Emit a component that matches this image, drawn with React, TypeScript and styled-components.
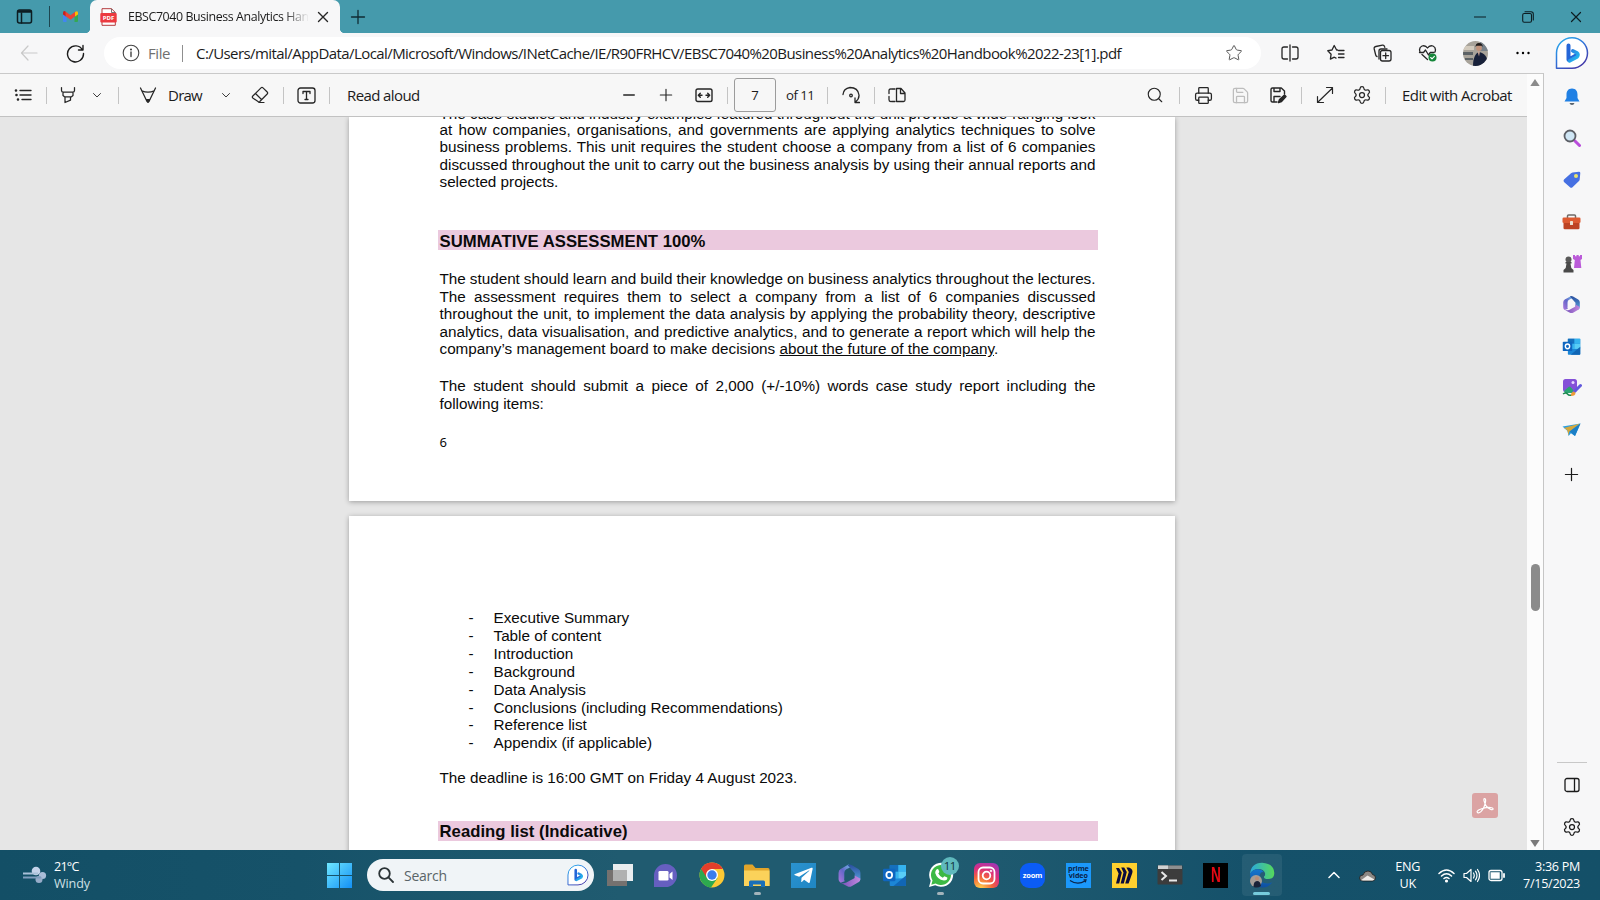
import React from 'react';
import styled, { createGlobalStyle } from 'styled-components';
import { Star, Printer, Save, Search, Settings } from 'lucide-react';
import { FaTelegramPlane } from 'react-icons/fa';

const GlobalStyle = createGlobalStyle`
  * { box-sizing: border-box; }
  body { margin: 0; font-family: 'Open Sans', 'Noto Sans', sans-serif; color: #1b1b1b; overflow: hidden; }
  svg { display: block; flex: none; }
`;

/* ---------- shell ---------- */
const Window = styled.div`
  width: 1600px;
  height: 900px;
  display: flex;
  flex-direction: column;
  overflow: hidden;
  background: #f7f7f8;
`;
const Cell = styled.div<{ $w: number; $ml?: number; $color?: string }>`
  flex: none;
  width: ${(p) => p.$w}px;
  margin-left: ${(p) => p.$ml ?? 0}px;
  color: ${(p) => p.$color ?? '#262626'};
  display: flex;
  align-items: center;
  justify-content: center;
`;
const Divider = styled.i<{ $ml?: number; $h?: number; $color?: string }>`
  flex: none;
  width: 1px;
  height: ${(p) => p.$h ?? 17}px;
  margin-left: ${(p) => p.$ml ?? 0}px;
  background: ${(p) => p.$color ?? '#c4c4c4'};
`;

/* ---------- title bar ---------- */
const TitleBar = styled.header`
  flex: none;
  height: 33px;
  display: flex;
  align-items: center;
  background: #459aac;
`;
const Tab = styled.div`
  position: relative;
  margin-left: 2px;
  width: 250px;
  height: 33px;
  padding-left: 10px;
  display: flex;
  align-items: center;
  background: #f7f7f8;
  border-radius: 7px 7px 0 0;
  &::before, &::after {
    content: '';
    position: absolute;
    bottom: 0;
    width: 5px;
    height: 5px;
  }
  &::before { left: -5px; background: radial-gradient(circle at 0 0, transparent 5px, #f7f7f8 5.5px); }
  &::after { right: -5px; background: radial-gradient(circle at 100% 0, transparent 5px, #f7f7f8 5.5px); }
`;
const TabTitle = styled.span`
  width: 180px;
  margin-left: 11px;
  white-space: nowrap;
  font-size: 12.4px;
  letter-spacing: -0.4px;
  mask-image: linear-gradient(90deg, #000 156px, transparent 181px);
`;
const WindowButtons = styled.div`
  margin-left: auto;
  display: flex;
`;

/* ---------- address bar ---------- */
const AddressBar = styled.div`
  flex: none;
  height: 40px;
  display: flex;
  align-items: center;
`;
const UrlPill = styled.div`
  flex: none;
  margin-left: 10px;
  width: 1157px;
  height: 32px;
  display: flex;
  align-items: center;
  background: #fff;
  border-radius: 16px;
  font-size: 15px;
  letter-spacing: -0.571px;
`;
const Scheme = styled.span`
  width: 26px;
  margin-left: 8px;
  color: #707070;
  letter-spacing: -0.4px;
`;
const Url = styled.span`
  margin-left: 13px;
  width: 1018px;
  white-space: nowrap;
`;
const Avatar = styled.div`
  width: 25px;
  height: 25px;
  border-radius: 50%;
  overflow: hidden;
`;

/* ---------- viewer ---------- */
const Body = styled.div`
  flex: none;
  height: 777px;
  display: flex;
`;
const Viewer = styled.div`
  width: 1544px;
  display: flex;
  border-top: 1px solid #c9c9c9;
  border-right: 1px solid #c6c6c6;
`;
const ViewerMain = styled.main`
  width: 1527px;
  display: flex;
  flex-direction: column;
`;
const Toolbar = styled.div`
  flex: none;
  height: 43px;
  display: flex;
  align-items: center;
  border-bottom: 1px solid #c2c2c2;
  background: #f7f7f7;
`;
const ToolGroup = styled.div<{ $w?: number }>`
  flex: none;
  width: ${(p) => (p.$w ? `${p.$w}px` : 'auto')};
  height: 42px;
  display: flex;
  align-items: center;
`;
const ToolLabel = styled.span<{ $w?: number; $ml?: number; $small?: boolean; $ls?: number }>`
  width: ${(p) => (p.$w ? `${p.$w}px` : 'auto')};
  margin-left: ${(p) => p.$ml ?? 0}px;
  font-size: ${(p) => (p.$small ? 13.2 : 15)}px;
  letter-spacing: ${(p) => p.$ls ?? -0.6}px;
  white-space: nowrap;
`;
const PageBox = styled.div`
  width: 42px;
  height: 34px;
  margin-left: 6px;
  border: 1px solid #9c9c9c;
  border-radius: 3px;
  font-size: 13.2px;
  display: flex;
  align-items: center;
  justify-content: center;
`;
const ScrollTrack = styled.div`
  width: 16px;
  height: 776px;
  padding: 5px 0 3px;
  display: flex;
  flex-direction: column;
  align-items: center;
  background: #fcfcfc;
`;
const ScrollThumb = styled.div`
  width: 9px;
  height: 47px;
  margin: 478px 0 auto;
  border-radius: 5px;
  background: #8b8b8b;
`;

/* ---------- document ---------- */
const Canvas = styled.div`
  position: relative;
  height: 733px;
  padding-left: 349px;
  overflow: hidden;
  background: #e6e6e6;
`;
const Page = styled.article<{ $h: number; $top: number }>`
  display: flow-root;
  width: 826px;
  height: ${(p) => p.$h}px;
  margin-bottom: 15px;
  padding: ${(p) => p.$top}px 0 0 90.5px;
  background: #fff;
  box-shadow: 0 1px 5px rgba(0, 0, 0, 0.32);
  font-family: 'Liberation Sans', Arial, sans-serif;
  font-size: 15.28px;
  line-height: 17.57px;
  color: #0a0a0a;
`;
const Paragraph = styled.div<{ $mt?: number }>`
  margin-top: ${(p) => p.$mt ?? 0}px;
`;
const Line = styled.p<{ $natural?: boolean }>`
  width: 656px;
  margin: 0;
  white-space: ${(p) => (p.$natural ? 'nowrap' : 'normal')};
  word-spacing: ${(p) => (p.$natural ? 0 : -0.5)}px;
  text-align-last: ${(p) => (p.$natural ? 'left' : 'justify')};
`;
const CutLine = styled(Line)`
  margin-bottom: -1.5px;
`;
const Band = styled.h2<{ $mt: number; $lh?: number }>`
  width: 660.5px;
  height: 20px;
  margin: ${(p) => p.$mt}px 0 0 -2px;
  padding-left: 2px;
  background: #ebc9de;
  font-size: 16.7px;
  letter-spacing: 0.03px;
  line-height: ${(p) => p.$lh ?? 22}px;
`;
const PageNumber = styled.div`
  margin-top: 21px;
  font: 13px/18px 'Noto Sans', sans-serif;
`;
const Items = styled.ul`
  list-style: none;
  margin: 0;
  padding: 0;
  line-height: 17.85px;
`;
const Item = styled.li`
  display: flex;
  padding-left: 29px;
  &::before { content: '-'; width: 25px; }
`;
const AcrobatButton = styled.div`
  position: absolute;
  left: 1472px;
  top: 676px;
  width: 26px;
  height: 25px;
  display: flex;
  align-items: center;
  justify-content: center;
  border-radius: 3px;
  background: #dba3a3;
`;

/* ---------- sidebar ---------- */
const Sidebar = styled.aside`
  width: 55px;
  height: 777px;
  padding: 3px 0 3px;
  display: flex;
  flex-direction: column;
  align-items: center;
`;
const SideItem = styled.div<{ $h?: number }>`
  flex: none;
  height: ${(p) => p.$h ?? 41.6}px;
  display: flex;
  align-items: center;
`;
const SideRule = styled.hr`
  width: 30px;
  height: 1px;
  margin: auto 0 1px;
  border: 0;
  background: #c8c8c8;
`;

/* ---------- taskbar ---------- */
const Taskbar = styled.footer`
  flex: none;
  height: 50px;
  display: flex;
  align-items: center;
  background: linear-gradient(90deg, #134f66 0, #165269 300px, #205b70 620px, #205b70 940px, #15516a 1250px, #145068 100%);
  color: #fff;
  font-size: 12.6px;
  line-height: 17px;
`;
const Weather = styled.div`
  flex: none;
  width: 273px;
  margin-left: 6px;
  span:last-child { color: #cfe0e6; letter-spacing: -0.1px; }
`;
const Stack = styled.div<{ $align?: string; $ls?: number }>`
  display: flex;
  flex-direction: column;
  text-align: ${(p) => p.$align ?? 'left'};
  letter-spacing: ${(p) => p.$ls ?? -0.35}px;
`;
const SearchBox = styled.div`
  flex: none;
  width: 227px;
  height: 32px;
  margin: 0 3px 0 15px;
  padding: 0 5px 0 11px;
  display: flex;
  align-items: center;
  border-radius: 16px;
  background: #f0f4f7;
  color: #5a6468;
  font-size: 14px;
  letter-spacing: -0.24px;
`;
const SearchLabel = styled.span`
  margin: 0 auto 0 10px;
`;
const TaskButton = styled.div<{ $active?: boolean }>`
  flex: none;
  position: relative;
  width: 40px;
  height: 42px;
  margin: 0 2.93px;
  display: flex;
  align-items: center;
  justify-content: center;
  border-radius: 4px;
  background: ${(p) => (p.$active ? 'rgba(255,255,255,0.07)' : 'none')};
`;
const Running = styled.i<{ $active?: boolean }>`
  position: absolute;
  bottom: 1px;
  width: ${(p) => (p.$active ? 17 : 7)}px;
  height: 3px;
  border-radius: 2px;
  background: ${(p) => (p.$active ? '#76cbdc' : '#a3b4bb')};
`;
const Badge = styled.span`
  position: absolute;
  left: 20px;
  top: 3px;
  width: 18px;
  height: 18px;
  border-radius: 50%;
  background: #5fb9bd;
  color: #10303a;
  font-size: 11.5px;
  line-height: 17px;
  text-align: center;
  letter-spacing: -0.6px;
`;
const Tile = styled.div<{ $bg: string; $round?: number }>`
  width: 25px;
  height: 25px;
  display: flex;
  flex-direction: column;
  align-items: center;
  justify-content: center;
  overflow: hidden;
  border-radius: ${(p) => p.$round ?? 0}px;
  background: ${(p) => p.$bg};
`;
const ZoomWord = styled.b`
  font-size: 7.5px;
  line-height: 10px;
  letter-spacing: -0.2px;
`;
const PrimeWord = styled.b`
  font-size: 7.2px;
  line-height: 7px;
  letter-spacing: -0.1px;
  color: #0b2347;
`;
const NetflixLetter = styled.b`
  font: 700 22px/24px 'Liberation Sans', sans-serif;
  color: #e50914;
  transform: scaleX(0.62);
`;
const Clock = styled.div`
  margin: 0 20px 0 auto;
`;

/* ---------- drawings ---------- */
type LineIconProps = { s?: number; sw?: number; box?: number; children: React.ReactNode };
const LineIcon = ({ s = 20, sw = 1.3, box = 20, children }: LineIconProps) => (
  <svg width={s} height={s} viewBox={`0 0 ${box} ${box}`} fill="none" stroke="currentColor" strokeWidth={sw} strokeLinecap="round" strokeLinejoin="round">
    {children}
  </svg>
);
const Chevron = () => <LineIcon s={10} box={10} sw={0.9}><path d="M1.500 3.500 5 7l3.500-3.500" /></LineIcon>;
const Plus = ({ s = 16 }: { s?: number }) => <LineIcon s={s} box={16} sw={1.3}><path d="M8 1.500v13M1.500 8h13" /></LineIcon>;
const Cross = ({ s = 12, sw = 1.4 }: { s?: number; sw?: number }) => <LineIcon s={s} box={12} sw={sw}><path d="m1.500 1.500 9 9m0-9-9 9" /></LineIcon>;
const Gear = ({ s = 20 }: { s?: number }) => <Settings size={s} strokeWidth={1.5} />;
const Bing = ({ s }: { s: number }) => (
  <svg width={s} height={s} viewBox="0 0 34 34">
    <defs>
      <linearGradient id="bo" x1="0" y1="0" x2="0.7" y2="1"><stop stopColor="#28b4ee" /><stop offset=".5" stopColor="#2f77dc" /><stop offset="1" stopColor="#4438a8" /></linearGradient>
      <linearGradient id="bb" x1="0" y1="0" x2="1" y2="1"><stop stopColor="#2b7de0" /><stop offset="1" stopColor="#22c0f0" /></linearGradient>
    </defs>
    <path d="M1.500 32.300V17A15.500 15.300 0 1 1 17 32.300z" fill="#fff" stroke="url(#bo)" strokeWidth="1.500" strokeLinejoin="round" />
    <path d="M13.500 9.500v14.300l7.500-4.300" fill="none" stroke="#2466d8" strokeWidth="4" strokeLinejoin="round" strokeLinecap="round" />
    <path d="m17.800 14.800 4 2q2.300 1.600.3 4l-7.600 4" fill="none" stroke="url(#bb)" strokeWidth="3.600" strokeLinejoin="round" strokeLinecap="round" />
  </svg>
);
const Gmail = () => (
  <svg width="17" height="13" viewBox="0 0 17 13">
    <path d="M1 3v8q0 1 1 1h2.500V5z" fill="#4285f4" /><path d="M16 3v8q0 1-1 1h-2.500V5z" fill="#34a853" />
    <path d="M1 3q0-2.500 2-1.800L4 2v4.500L1 4.500z" fill="#c5221f" /><path d="M3.500 1.500l5 3.800 5-3.800v4.500l-5 3.800-5-3.800z" fill="#ea4335" /><path d="M13 2q3-2 3 1v1.500l-3 2z" fill="#fbbc04" />
  </svg>
);
const PdfFile = () => (
  <svg width="17" height="18" viewBox="0 0 17 18">
    <path d="M2 .7h9.500L15.300 4.500V17.300H2z" fill="#fff" stroke="#b33a3d" strokeWidth="1" /><path d="M11.500.7v3.800h3.800" fill="none" stroke="#555" strokeWidth=".8" />
    <rect x=".3" y="5" width="16.400" height="9.500" rx="1" fill="#ec3a40" />
    <text x="8.500" y="12" textAnchor="middle" fontSize="6" fontWeight="700" fontFamily="Open Sans, sans-serif" fill="#fff">PDF</text>
  </svg>
);
const Person = () => (
  <svg width="25" height="25" viewBox="0 0 25 25">
    <rect width="25" height="25" fill="#a8a39a" /><path d="M0 5h11v4H0z" fill="#d2cabd" /><path d="M0 11h10v3H0zM2 17h8v2H2z" fill="#5b6165" /><path d="M17 0h8v10h-8z" fill="#77818a" />
    <path d="M10 25c0-9 3-13 6-14 5 1 9 4 9 14z" fill="#18213a" /><circle cx="16" cy="7" r="2.900" fill="#c1937c" /><path d="M12.500 6q0-4 3.500-4t3.800 4l-1-1.200h-5.200z" fill="#201a19" /><path d="m14.500 10.500 1.500 5 1-5z" fill="#c9a595" />
  </svg>
);
const Microsoft365 = ({ s }: { s: number }) => (
  <svg width={s} height={s} viewBox="0 0 24 24">
    <defs>
      <linearGradient id="m1" x1="0" y1="1" x2="1" y2="0"><stop stopColor="#b079dd" /><stop offset=".5" stopColor="#6367c9" /><stop offset="1" stopColor="#74c2e8" /></linearGradient>
      <linearGradient id="m2" x1="0" y1="0" x2="0" y2="1"><stop stopColor="#2a4e9e" /><stop offset="1" stopColor="#5aa6e0" /></linearGradient>
      <linearGradient id="m3"><stop stopColor="#7350b8" /><stop offset="1" stopColor="#c489e0" /></linearGradient>
    </defs>
    <path d="M11 1.500 3.500 5.800Q1.500 7 1.500 9.500v6q0 2.500 2 3.500l4-1.500q-1-1-.5-3V9.500Q7 7 9 6l5-2.500z" fill="url(#m1)" />
    <path d="M10 2q2-1.200 4 0l6.500 3.800q2 1.200 2 3.500v6q0 2-2 3.200L17 16V9.800z" fill="url(#m2)" />
    <path d="M3.500 19 10 22.300q2 1 4 0l6.500-3.800q2-1.200 2-3.500L17 12v2.500L9 18.800q-3 1-5.500.2z" fill="url(#m3)" />
  </svg>
);
const Outlook = ({ s }: { s: number }) => (
  <svg width={s} height={s * 0.92} viewBox="0 0 26 24">
    <rect x="8" y="1" width="17" height="22" rx="1" fill="#1c86d6" /><path d="M8 1h9v7H8z" fill="#1570bd" /><path d="M17 1h8v7h-8zM8 8h9v7H8z" fill="#35b3ef" /><path d="M17 8h8v7h-8z" fill="#58cdf6" /><path d="m25 12-13 11h12q1 0 1-1z" fill="#1166b5" />
    <rect x="1" y="5" width="13" height="13" rx="1.200" fill="#0f66c0" /><ellipse cx="7.500" cy="11.500" rx="3" ry="3.300" fill="none" stroke="#fff" strokeWidth="1.900" />
  </svg>
);
const SaveAs = () => (
  <LineIcon s={18} box={18} sw={1.4}>
    <path d="M8 16H3.500Q2 16 2 14.500v-11Q2 2 3.500 2h8.800L15.500 5v3M5 2v3.500h6V2M5 15.500v-5h6" /><path d="m9.500 16.500 1-3 5-4.500 1.500 1.500-4.500 5z" fill="currentColor" />
  </LineIcon>
);
const Highlighter = () => <LineIcon s={18} box={18} sw={1.25}><path d="M2.500 1.500v3q0 1.700 1.700 1.700h9.600q1.700 0 1.700-1.700v-3M4 6.200v3.300l1.500 1.300h7L14 9.500V6.200M6 10.800v5.700l5.500-2.300v-3.400" /></LineIcon>;
const Pen = () => <LineIcon s={18} box={18} sw={1.25}><path d="M1.500 2l1.200 2.500L8 15.500q1 1.500 2 0l5.300-11L16.500 2M2.700 4.700q6.300 3 12.600 0" /><path d="M7.500 13.500h3L9 16z" fill="currentColor" /></LineIcon>;

const bulletItems = ['Executive Summary', 'Table of content', 'Introduction', 'Background', 'Data Analysis', 'Conclusions (including Recommendations)', 'Reference list', 'Appendix (if applicable)'];

export default function App() {
  return (
    <Window>
      <GlobalStyle />
      <TitleBar>
        <Cell $w={49} $color="#0d1d22">
          <LineIcon s={17} box={17} sw={1.5}><rect x="1.500" y="2" width="14" height="13" rx="2" /><path d="M2.500 3.500h12" strokeWidth="2.400" /><path d="M5.500 5v10" /></LineIcon>
        </Cell>
        <Divider $h={21} $color="#1d4650" />
        <Cell $w={36} $ml={2}><Gmail /></Cell>
        <Tab>
          <PdfFile />
          <TabTitle>EBSC7040 Business Analytics Han</TabTitle>
          <Cell $w={20} $ml={5}><Cross /></Cell>
        </Tab>
        <Cell $w={36} $color="#0f2b33"><Plus /></Cell>
        <WindowButtons>
          <Cell $w={48} $color="#0d1d22"><LineIcon s={12} box={12} sw={1.2}><path d="M.5 6h11" /></LineIcon></Cell>
          <Cell $w={48} $color="#0d1d22"><LineIcon s={12} box={12} sw={1.1}><rect x=".7" y="2.500" width="8.800" height="8.800" rx="1.500" /><path d="M3 .7h6q2.300 0 2.300 2.300v6" /></LineIcon></Cell>
          <Cell $w={48} $color="#0d1d22"><Cross sw={1.2} /></Cell>
        </WindowButtons>
      </TitleBar>

      <AddressBar>
        <Cell $w={30} $ml={14} $color="#c9c9c9"><LineIcon s={18} box={18} sw={1.2}><path d="M17 9H1.500M8 2 1.500 9 8 16" /></LineIcon></Cell>
        <Cell $w={38} $ml={12} $color="#1c1c1c"><LineIcon s={19} box={19} sw={1.4}><path d="M16.500 6A8 8 0 1 0 17.500 9.500M17 1.500V6h-4.500" /></LineIcon></Cell>
        <UrlPill>
          <Cell $w={18} $ml={18} $color="#444"><LineIcon s={18} box={18} sw={1.1}><circle cx="9" cy="9" r="7.800" /><path d="M9 8v4.500" strokeWidth="1.400" /><circle cx="9" cy="5.500" r=".5" fill="currentColor" /></LineIcon></Cell>
          <Scheme>File</Scheme>
          <Divider $ml={8} $color="#8f8f8f" />
          <Url>C:/Users/mital/AppData/Local/Microsoft/Windows/INetCache/IE/R90FRHCV/EBSC7040%20Business%20Analytics%20Handbook%2022-23[1].pdf</Url>
          <Cell $w={40} $color="#555"><Star size={18} strokeWidth={1.3} /></Cell>
        </UrlPill>
        <Cell $w={46} $ml={6}><LineIcon s={18} box={18} sw={1.3}><path d="M6.500 3H3Q1 3 1 5v8q0 2 2 2h3.500M11.500 3H15q2 0 2 2v8q0 2-2 2h-3.500M9 1v16" /></LineIcon></Cell>
        <Cell $w={46}><LineIcon s={18} box={18} sw={1.3}><path d="M10.500 6 9.600 6 7.200 1.500 5 6l-4.200.7 3.300 3.500-.7 5 3.900-2 1.700.9M11.500 6.500H17M11.500 10H17M11.500 13.500H17" /></LineIcon></Cell>
        <Cell $w={46}><LineIcon s={19} box={19} sw={1.3}><path d="M4 12.500Q3 12.300 2.700 11L1.200 5Q.8 3 2.800 2.500l6.700-1.300q1.500-.3 2 1.300l.3.800" /><path d="M6 15V7q0-2 2-2h6" /><rect x="7.500" y="6.500" width="10.500" height="10.500" rx="2" /><path d="M12.700 9v5.500M10 11.700h5.500" /></LineIcon></Cell>
        <Cell $w={46}>
          <LineIcon s={20} sw={1.3}><path d="M2 9Q.5 4.500 4 3q3.500-1 5.500 2 2-3 5.500-2 3.500 1.500 2 6M4 11.500l5.500 5M1.500 9.500h4L7.500 7l3 5 1.800-2.500H16" /><circle cx="14.500" cy="14.500" r="4" fill="#15863a" stroke="none" /><path d="m12.700 14.500 1.300 1.300 2.400-2.500" stroke="#fff" strokeWidth="1.100" /></LineIcon>
        </Cell>
        <Cell $w={48}><Avatar><Person /></Avatar></Cell>
        <Cell $w={48}><svg width="16" height="4" viewBox="0 0 16 4"><circle cx="2.500" cy="2" r="1.200" /><circle cx="8" cy="2" r="1.200" /><circle cx="13.500" cy="2" r="1.200" /></svg></Cell>
        <Cell $w={50}><Bing s={34} /></Cell>
      </AddressBar>

      <Body>
        <Viewer>
          <ViewerMain>
            <Toolbar>
              <ToolGroup $w={610}>
                <Cell $w={46}><LineIcon s={18} box={18} sw={1.4}><path d="M6 4.500h11M6 9h11M8 13.500h9" /><circle cx="2" cy="4.500" r=".6" fill="currentColor" /><circle cx="2.500" cy="9" r=".6" fill="currentColor" /><circle cx="4" cy="13.500" r=".6" fill="currentColor" /></LineIcon></Cell>
                <Divider />
                <Cell $w={42}><Highlighter /></Cell>
                <Cell $w={16}><Chevron /></Cell>
                <Divider $ml={13} />
                <Cell $w={40} $ml={9}><Pen /></Cell>
                <ToolLabel $w={44} $ls={-0.75}>Draw</ToolLabel>
                <Cell $w={26} $ml={1}><Chevron /></Cell>
                <Cell $w={42}><LineIcon s={18} box={18} sw={1.2}><path d="M1.800 10 10 1.800q1-1 2 0l4.200 4.200q1 1 0 2L8.800 15.500Q8 16.500 7 15.500L1.800 12q-1-1 0-2zM4.500 7.500l6 6M8 16.500h5" /></LineIcon></Cell>
                <Divider $ml={2} />
                <Cell $w={44}><LineIcon s={19} box={19} sw={1.3}><rect x="1" y="2" width="17" height="15" rx="2.500" /><path d="M6 7.500V5.500h7v2M9.500 5.500v8M8 13.500h3" /></LineIcon></Cell>
                <Divider $ml={1} />
                <ToolLabel $ml={17}>Read aloud</ToolLabel>
              </ToolGroup>
              <ToolGroup $w={525}>
                <Cell $w={38}><LineIcon s={12} box={12}><path d="M.7 6h10.600" /></LineIcon></Cell>
                <Cell $w={36}><Plus s={14} /></Cell>
                <Cell $w={40}><LineIcon s={18} box={18} sw={1.4}><rect x="1" y="3" width="16" height="12.500" rx="1.800" /><path d="M3.500 9.200H7M11 9.200h3.500M5.300 7.200l-2 2 2 2M12.700 7.200l2 2-2 2" /></LineIcon></Cell>
                <Divider $ml={3} />
                <PageBox>7</PageBox>
                <ToolLabel $small $ml={10} $w={41} $ls={-0.5}>of 11</ToolLabel>
                <Divider />
                <Cell $w={46}><LineIcon s={18} box={18} sw={1.3}><path d="M1 8.500Q1.500 2.500 8 1.500q8 0 9 7.500.3 4-3.500 7M13 12v4.500h4.500" /><circle cx="9" cy="9.500" r="1.300" /></LineIcon></Cell>
                <Divider />
                <Cell $w={44}><LineIcon s={18} box={18} sw={1.3}><path d="M7 3H3.500M1 5.500v2M1 10.500v2M3.500 15.500H7" /><path d="M8.500 2.500H13L17 7v7q0 1.500-1.500 1.500h-7zM12.500 3v4.500H17M1 4.500Q1 3 2.500 3M1 13.500q0 2 1.500 2" /></LineIcon></Cell>
              </ToolGroup>
              <ToolGroup>
                <Cell $w={40}><Search size={18} strokeWidth={1.5} /></Cell>
                <Divider $ml={4} />
                <Cell $w={46}><Printer size={19} strokeWidth={1.6} /></Cell>
                <Cell $w={28} $color="#bdbdbd"><Save size={19} strokeWidth={1.6} /></Cell>
                <Cell $w={47}><SaveAs /></Cell>
                <Divider />
                <Cell $w={46}><LineIcon s={18} box={18} sw={1.2}><path d="M2 16 16.500 2M10.500 1.500h6v6M1.500 10.500v6h6" /></LineIcon></Cell>
                <Cell $w={28}><Gear s={20} /></Cell>
                <Divider $ml={9} />
                <ToolLabel $ml={16} $ls={-0.54}>Edit with Acrobat</ToolLabel>
              </ToolGroup>
            </Toolbar>
            <Canvas>
              <Page $h={384} $top={0}>
                <Paragraph $mt={-12.4}>
                  <CutLine>The case studies and industry examples featured throughout the unit provide a wide-ranging look</CutLine>
                  <Line>at how companies, organisations, and governments are applying analytics techniques to solve</Line>
                  <Line>business problems. This unit requires the student choose a company from a list of 6 companies</Line>
                  <Line>discussed throughout the unit to carry out the business analysis by using their annual reports and</Line>
                  <Line $natural>selected projects.</Line>
                </Paragraph>
                <Band $mt={39.2} $lh={23}>SUMMATIVE ASSESSMENT 100%</Band>
                <Paragraph $mt={19.9}>
                  <Line>The student should learn and build their knowledge on business analytics throughout the lectures.</Line>
                  <Line>The assessment requires them to select a company from a list of 6 companies discussed</Line>
                  <Line>throughout the unit, to implement the data analysis by applying the probability theory, descriptive</Line>
                  <Line>analytics, data visualisation, and predictive analytics, and to generate a report which will help the</Line>
                  <Line $natural>company’s management board to make decisions <u>about the future of the company</u>.</Line>
                </Paragraph>
                <Paragraph $mt={19.5}>
                  <Line>The student should submit a piece of 2,000 (+/-10%) words case study report including the</Line>
                  <Line $natural>following items:</Line>
                </Paragraph>
                <PageNumber>6</PageNumber>
              </Page>
              <Page $h={400} $top={93.3}>
                <Items>{bulletItems.map((t) => <Item key={t}>{t}</Item>)}</Items>
                <Paragraph $mt={16.8}><Line $natural>The deadline is 16:00 GMT on Friday 4 August 2023.</Line></Paragraph>
                <Band $mt={34.3}>Reading list (Indicative)</Band>
              </Page>
              <AcrobatButton>
                <svg width="18" height="18" viewBox="0 0 18 18" fill="none" stroke="#fff" strokeWidth="1.200"><path d="M8.500 1.500c2 0 1 5-.5 8.500S3.500 17 1.500 15.500 5 11.500 10 10.700s7.500.3 7 1.600-4.500-.5-6.500-3S7 1.500 8.500 1.500z" /></svg>
              </AcrobatButton>
            </Canvas>
          </ViewerMain>
          <ScrollTrack>
            <svg width="10" height="7" viewBox="0 0 10 7"><path d="M5 0 9.700 7H.3z" fill="#8b8b8b" /></svg>
            <ScrollThumb />
            <svg width="10" height="7" viewBox="0 0 10 7"><path d="M5 7 9.700 0H.3z" fill="#7b7b7b" /></svg>
          </ScrollTrack>
        </Viewer>
        <Sidebar>
          <SideItem>
            <svg width="16" height="18" viewBox="0 0 16 18"><path d="M8 .5c4 0 5.500 3 5.500 6V10l2 3.500H.5l2-3.500V6.500c0-3 1.500-6 5.500-6z" fill="#2080e4" /><path d="M5.500 15h5q-.5 2-2.500 2t-2.500-2z" fill="#59646f" /></svg>
          </SideItem>
          <SideItem>
            <svg width="18" height="18" viewBox="0 0 18 18"><path d="m11.500 11.500 5 5" stroke="#b94ddb" strokeWidth="3" strokeLinecap="round" /><circle cx="7" cy="7" r="5.500" fill="#cfe6f5" stroke="#5c5f66" strokeWidth="1.800" /></svg>
          </SideItem>
          <SideItem>
            <svg width="18" height="18" viewBox="0 0 18 18"><path d="M9.500 1.500 16 .8q1.300 0 1.300 1.300l-.6 6.400q0 .8-.7 1.500l-6.500 6.300q-1.300 1-2.500 0L1 11q-1-1.300 0-2.500L8 2.200z" fill="#4670e2" /><circle cx="13" cy="5" r="2" fill="#e9e36b" /></svg>
          </SideItem>
          <SideItem>
            <svg width="19" height="16" viewBox="0 0 19 16"><path d="M5.500 4V2q0-1 1-1h6q1 0 1 1v2" fill="none" stroke="#6f6a66" strokeWidth="1.500" /><rect x=".5" y="3.500" width="18" height="5.500" rx="1.300" fill="#dd5a31" /><path d="M1.500 9h16v5q0 1.300-1.300 1.300H2.800Q1.500 15.300 1.500 14z" fill="#bd4323" /><rect x="8" y="7" width="3" height="4" rx=".6" fill="#ece0cf" /></svg>
          </SideItem>
          <SideItem>
            <svg width="20" height="19" viewBox="0 0 20 19"><path d="M11 1h2v1.300h1.500V1h2.200v1.300H18V1h2v4l-1.500 1 .8 8H12l.8-8L11 5z" fill="#bb5bd9" /><circle cx="6.500" cy="5.500" r="3" fill="#595959" /><path d="M3.500 8h6v1.500H8.500l.8 4.500 2.200 2v2.500h-10V16l2.200-2 .8-4.500h-1z" fill="#4a4a4a" /></svg>
          </SideItem>
          <SideItem><Microsoft365 s={19} /></SideItem>
          <SideItem><Outlook s={19} /></SideItem>
          <SideItem>
            <svg width="20" height="19" viewBox="0 0 20 19"><rect x="1" y="1" width="14" height="13" rx="2.500" fill="#8451d8" /><circle cx="11" cy="4.500" r="1.500" fill="#e9d8ff" /><path d="m2 13 4.500-4q1-1 2 0l4 4.500-2 1.500H3z" fill="#2aa571" /><path d="M1 16q3-2 4.500 0t4 1" fill="none" stroke="#1d8a50" strokeWidth="1.500" /><path d="m12 14 6.500-6.500" stroke="#6259dd" strokeWidth="3" strokeLinecap="round" /><path d="M9 18q-.5-4 3-4.500l1.500 1.500q0 3-4.500 3z" fill="#eb9c38" /></svg>
          </SideItem>
          <SideItem>
            <svg width="19" height="14" viewBox="0 0 19 14"><path d="M.5 3.500 18.500.5 13 13 9 10.300 6.500 13l-1-5z" fill="#2e9fe0" /><path d="m2 5 16-4.500L7 9v3.500L5 7z" fill="#d5a83c" /><path d="m18.500.5-11 8L13 13z" fill="#1c7fc6" /></svg>
          </SideItem>
          <SideItem $h={48}><Plus s={15} /></SideItem>
          <SideRule />
          <SideItem $h={42}><LineIcon s={16} box={16} sw={1.3}><rect x="1" y="1.500" width="14" height="13" rx="2" /><path d="M10.500 2v12" /></LineIcon></SideItem>
          <SideItem $h={41}><Gear s={20} /></SideItem>
        </Sidebar>
      </Body>

      <Taskbar>
        <Cell $w={28} $ml={20}>
          <svg width="25" height="18" viewBox="0 0 25 18"><circle cx="14" cy="5" r="4.300" fill="#c4d3ea" /><circle cx="20.500" cy="9.500" r="3.600" fill="#a9bdd8" /><circle cx="17" cy="13.500" r="3.500" fill="#96acc9" /><path d="M1 7.500h15" stroke="#a9c0d8" strokeWidth="2" /><path d="M1 11.500h18" stroke="#7f9dbd" strokeWidth="2" /></svg>
        </Cell>
        <Weather><Stack $ls={-0.8}><span>21°C</span><span>Windy</span></Stack></Weather>
        <svg width="25" height="25" viewBox="0 0 25 25">
          <defs><linearGradient id="win" gradientUnits="userSpaceOnUse" x1="0" y1="0" x2="25" y2="25"><stop stopColor="#6ee7ff" /><stop offset="1" stopColor="#1390f5" /></linearGradient></defs>
          <path d="M0 0h12v12H0zM13 0h12v12H13zM0 13h12v12H0zM13 13h12v12H13z" fill="url(#win)" />
        </svg>
        <SearchBox>
          <LineIcon s={16} box={16} sw={1.8}><circle cx="6.500" cy="6.500" r="5.300" stroke="#2b3336" /><path d="m10.700 10.700 4.300 4.300" stroke="#2b3336" /></LineIcon>
          <SearchLabel>Search</SearchLabel>
          <Bing s={22} />
        </SearchBox>
        <TaskButton><svg width="26" height="24" viewBox="0 0 26 24"><rect x="0" y="7" width="20" height="16" fill="#75716f" /><rect x="6" y="1" width="20" height="17" fill="#e9edef" /><path d="M6 7h14v11H6z" fill="#b0b1b1" /></svg></TaskButton>
        <TaskButton><svg width="25" height="25" viewBox="0 0 25 25"><path d="M12.500 1A11.500 11.500 0 1 1 12.500 24H1V12A11.500 11.500 0 0 1 12.500 1z" fill="#665fc0" /><rect x="5.500" y="8" width="10" height="9.500" rx="1.300" fill="#fff" /><path d="m16.500 11 3-2.500v8.500l-3-2.500z" fill="#fff" /></svg></TaskButton>
        <TaskButton>
          <svg width="26" height="26" viewBox="0 0 26 26"><circle cx="13" cy="13" r="12.500" fill="#fcc934" /><path d="M13 13 2.200 6.700A12.500 12.500 0 0 0 12 25.500l6.500-9.500z" fill="#2da94f" /><path d="M13 .5A12.500 12.500 0 0 1 23.900 7H13L8 16 2.100 6.800A12.500 12.500 0 0 1 13 .5z" fill="#e43e2b" /><circle cx="13" cy="13" r="6" fill="#fff" /><circle cx="13" cy="13" r="4.700" fill="#3b7ded" /></svg>
        </TaskButton>
        <TaskButton><svg width="26" height="23" viewBox="0 0 26 23"><path d="M0 2q0-1.500 1.500-1.500h7L11.500 4H24q1.500 0 1.500 1.500V22H0z" fill="#e2a52a" /><path d="M0 6.500h25.500V22H0z" fill="#fbd25a" /><path d="M5 23v-5q0-1.500 1.500-1.500h13Q21 16.500 21 18v5h-4v-2.500H9V23z" fill="#1a6fb8" /></svg><Running /></TaskButton>
        <TaskButton><Tile $bg="linear-gradient(135deg,#2b93cf,#1f86c4)"><FaTelegramPlane size={21} /></Tile></TaskButton>
        <TaskButton><Microsoft365 s={25} /></TaskButton>
        <TaskButton><Outlook s={25} /></TaskButton>
        <TaskButton>
          <svg width="26" height="26" viewBox="0 0 26 26"><path d="M1 25l1.700-6.200A12 12 0 1 1 7.200 23.300z" fill="#fff" /><path d="M3.300 22.700l1.200-4.300A10 10 0 1 1 7.600 21.500z" fill="#3cb944" /><path d="M8.500 7.500q1.500-1 2 .3l.8 2q0 .8-1 1.700 1.500 3 4.500 4.200l1.500-1.500 3 1.400q.5 3-3.300 3-7-1.300-8.800-7.600 0-2.300 1.300-3.500z" fill="#fff" /></svg>
          <Badge>11</Badge><Running />
        </TaskButton>
        <TaskButton>
          <Tile $round={6} $bg="radial-gradient(circle at 25% 105%,#fdc24b 8%,#f4663a 38%,#d92e7f 65%,#8a3ac8 100%)">
            <LineIcon s={19} box={19} sw={1.8}><g stroke="#fff"><rect x="1.500" y="1.500" width="16" height="16" rx="4.500" /><circle cx="9.500" cy="9.500" r="3.800" /><circle cx="14" cy="5" r=".4" /></g></LineIcon>
          </Tile>
        </TaskButton>
        <TaskButton><Tile $round={9} $bg="#0b5cf5"><ZoomWord>zoom</ZoomWord></Tile></TaskButton>
        <TaskButton>
          <Tile $bg="#1b98fb"><PrimeWord>prime</PrimeWord><PrimeWord>video</PrimeWord><svg width="20" height="6" viewBox="0 0 20 6"><path d="M2 1.500q7.500 5 15 .5M15.500.8h2.500l-.7 2.500" fill="none" stroke="#0b2347" strokeWidth="1.200" /></svg></Tile>
        </TaskButton>
        <TaskButton>
          <Tile $bg="#ffd02f">
            <svg width="25" height="25" viewBox="0 0 25 25" fill="#0a0b3d"><path d="M4 5h3l2.800 4.500L7.200 20.500H4l2.600-10z" /><path d="M9.200 4.500h3l2.600 4.500-3 11.500H8.600l2.900-11z" /><path d="M14.400 4.500H17q4.500 1.500 3.300 5.500l-3.700 10.500h-3.400L16.800 9z" /></svg>
          </Tile>
        </TaskButton>
        <TaskButton><svg width="26" height="20" viewBox="0 0 26 20"><rect x=".5" y=".5" width="25" height="19" rx="1" fill="#3c3c3c" /><path d="M1 .5h24v3.500H1z" fill="#8d8f90" /><path d="M1 .5h10v3.500H1z" fill="#d0d2d3" /><path d="m4.500 7 4.500 4-4.500 4M12 15.500h8" fill="none" stroke="#e9e9e9" strokeWidth="2" /></svg></TaskButton>
        <TaskButton><Tile $bg="#000"><NetflixLetter>N</NetflixLetter></Tile></TaskButton>
        <TaskButton $active>
          <svg width="26" height="26" viewBox="0 0 26 26">
            <defs>
              <linearGradient id="e1"><stop stopColor="#2aa7e0" /><stop offset="1" stopColor="#56d95a" /></linearGradient>
              <linearGradient id="e2" x1="0" y1="0" x2="0" y2="1"><stop stopColor="#1576cf" /><stop offset="1" stopColor="#0f4fa0" /></linearGradient>
            </defs>
            <path d="M1 12Q2 1 13 .8 25 1.500 25.300 11q0 6-6.300 6-4.500 0-4-2.500 1.500-1 1-3.500Q14.500 7 9.500 7 3.500 7 1 12z" fill="url(#e1)" />
            <path d="M1 12Q3.500 7 9.500 7.200q4 .3 5.500 3-4-.7-4.500 4.300.5 7 8 7 2.500 0 5-1.500Q19 26 12.500 25.500 1.500 24 1 12z" fill="url(#e2)" />
            <circle cx="7" cy="19" r="6" fill="#a59d98" /><path d="M4.500 25q0-6 3.500-6t4 5q-3 2.500-7.500 1z" fill="#1a2238" /><circle cx="8" cy="16.500" r="2" fill="#ba8d78" />
          </svg>
          <Running $active />
        </TaskButton>
        <Cell $w={30} $ml={34} $color="#fff"><LineIcon s={12} box={12} sw={1.5}><path d="m1 8.500 5-5 5 5" /></LineIcon></Cell>
        <Cell $w={30} $ml={4}><svg width="17" height="13" viewBox="0 0 17 13"><path d="M4 12q-3.500 0-3.500-3T4 6q1-4 5-4 3.500 0 4.500 3.500 3 .5 3 3.300T13.500 12z" fill="#8c8884" stroke="#1b1b1b" strokeWidth=".8" /><path d="M2 11.300 8.500 6.500l7 4q-1 1-2.500 1H4z" fill="#efedea" /></svg></Cell>
        <Cell $w={50} $color="#fff"><Stack $align="center"><span>ENG</span><span>UK</span></Stack></Cell>
        <Cell $w={26} $ml={1} $color="#fff"><LineIcon s={17} box={17} sw={1.5}><path d="M1 6.500q7.500-7 15 0M3.500 9q5-4.500 10 0M6 11.500q2.500-2 5 0" /><circle cx="8.500" cy="14" r=".8" fill="currentColor" /></LineIcon></Cell>
        <Cell $w={24} $color="#fff"><LineIcon s={17} box={17} sw={1.2}><path d="M1 6.500h2.500L8 2.500v12l-4.500-4H1zM10.500 6q1.500 2.500 0 5M12.500 4.200q3 4.300 0 8.600M14.500 2.500q4 6 0 12" /></LineIcon></Cell>
        <Cell $w={26} $color="#fff"><LineIcon s={17} box={17} sw={1.3}><rect x="1" y="3.500" width="13" height="10" rx="2" /><rect x="3" y="5.500" width="8.500" height="6" fill="currentColor" strokeWidth=".5" /><path d="M16 7v3" strokeWidth="1.800" /></LineIcon></Cell>
        <Clock><Stack $align="right" $ls={-0.3}><span>3:36 PM</span><span>7/15/2023</span></Stack></Clock>
      </Taskbar>
    </Window>
  );
}
